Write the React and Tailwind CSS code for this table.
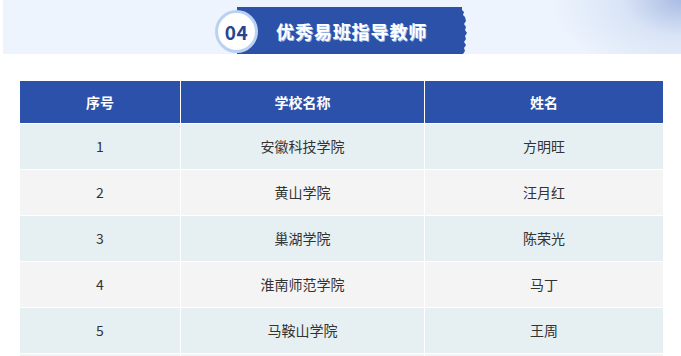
import React from "react";

const rows = [
  ["1", "安徽科技学院", "方明旺"],
  ["2", "黄山学院", "汪月红"],
  ["3", "巢湖学院", "陈荣光"],
  ["4", "淮南师范学院", "马丁"],
  ["5", "马鞍山学院", "王周"],
  ["", "", ""],
];

export default function App() {
  return (
    <div className="w-[681px] h-[356px] overflow-hidden bg-white font-['Noto_Sans_CJK_SC','Noto_Sans',sans-serif]">
      <div className="ml-[3px] h-[54px] flex items-end pl-[212px] bg-[radial-gradient(ellipse_130px_80px_at_100%_0%,#a9bce3_0%,#d9e4f6_45%,#edf4fd_100%)]">
        <div className="relative z-10 mb-[1px] w-[43px] h-[43px] rounded-full bg-white border-[3px] border-[#b9d2f3] flex items-center justify-center">
          <span className="text-[19px] font-bold text-[#26468f] leading-none tracking-[0.5px]">04</span>
        </div>
        <div className="-ml-[21px] flex h-[47px]">
          <div className="w-[223px] h-full bg-[#2c51a9] flex items-center pl-[39px]">
            <span className="text-[18px] font-bold text-white leading-none tracking-[0.9px] [text-shadow:1px_1px_0_#9fc2f0]">
              优秀易班指导教师
            </span>
          </div>
          <svg width="8" height="47" viewBox="0 0 8 47" className="block">
            <polygon
              fill="#2c51a9"
              points="0,0 2,0 2,3 4,5 3,8 5,10 6,14 4,17 6,20 5,23 7,26 5,29 6,32 4,35 6,38 4,41 5,44 3,47 0,47"
            />
          </svg>
        </div>
      </div>

      <div className="mt-[27px] ml-[20px] w-[643px] grid grid-cols-[160px_243px_238px] gap-px text-[14px]">
        <div className="h-[42px] bg-[#2c51ab] text-white font-bold flex items-center justify-center">序号</div>
        <div className="h-[42px] bg-[#2c51ab] text-white font-bold flex items-center justify-center">学校名称</div>
        <div className="h-[42px] bg-[#2c51ab] text-white font-bold flex items-center justify-center">姓名</div>
        {rows.map((r, i) =>
          r.map((c, j) => (
            <div
              key={i + "-" + j}
              className={
                "h-[45px] flex items-center justify-center text-[#333333] " +
                (i % 2 === 0 ? "bg-[#e6f0f3]" : "bg-[#f4f4f4]")
              }
            >
              {c}
            </div>
          ))
        )}
      </div>
    </div>
  );
}
